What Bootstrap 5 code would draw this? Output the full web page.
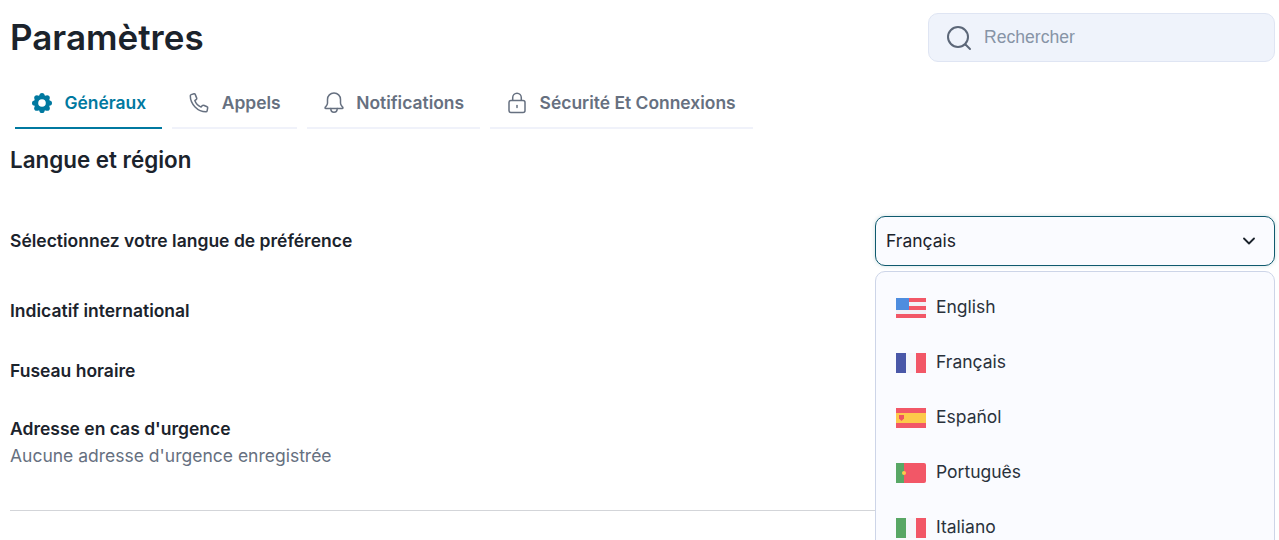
<!DOCTYPE html>
<html lang="fr">

<head>
  <meta charset="UTF-8">
  <meta name="viewport" content="width=device-width, initial-scale=1.0">
  <title>Paramètres</title>
  <link href="https://cdn.jsdelivr.net/npm/bootstrap@5.3.6/dist/css/bootstrap.min.css" rel="stylesheet">
  <style>
    html,
    body {
      height: 100%;
      overflow: hidden;
    }

    body {
      font-family: Inter, "Noto Sans", sans-serif;
      color: #1b232c;
      background: #fff;
    }

    .settings-page {
      padding: 13px 4px 0 10px;
    }

    .page-title {
      font-size: 35px;
      font-weight: 600;
      line-height: 48px;
      margin: -2px 0 0;
    }

    .search-box {
      width: 347px;
      height: 49px;
      background: #eff3fb;
      border: 1px solid #dfe5f3;
      border-radius: 10px;
      padding: 0 17px;
      gap: 12px;
      color: #8794a6;
      font-family: "Liberation Sans", Arial, sans-serif;
      font-size: 17.6px;
    }

    .settings-tabs {
      margin: 17px 0 0 5px;
      gap: 10px;
    }

    .settings-tabs .nav-link {
      height: 50px;
      padding: 0 16px;
      gap: 11.5px;
      font-size: 17.45px;
      font-weight: 600;
      color: #667080;
      border-bottom: 2px solid #f0f2fa;
    }

    .settings-tabs .nav-link.active {
      color: #0079a0;
      border-bottom-color: #0079a0;
    }

    .settings-tabs .nav-item:last-child .nav-link {
      padding-right: 17px;
    }

    .section-title {
      font-size: 22.4px;
      font-weight: 600;
      line-height: 30px;
      margin: 16px 0 0;
    }

    .setting-label {
      font-size: 17.5px;
      font-weight: 600;
      line-height: 24px;
    }

    .setting-hint {
      font-size: 17.5px;
      line-height: 24px;
      margin-top: 3px;
      color: #667080;
    }

    .lang-row {
      height: 50px;
      margin-top: 41px;
    }

    .phone-row {
      margin-top: 33px;
    }

    .zone-row {
      margin-top: 36px;
    }

    .address-row {
      margin-top: 34px;
    }

    .lang-picker {
      width: 400px;
    }

    .lang-select {
      height: 50px;
      padding: 0 19px 0 10px;
      background: #fafbff;
      border: 1px solid #0f5a6e;
      border-radius: 10px;
      box-shadow: 0 0 4px rgba(15, 90, 110, .2);
      font-size: 17.5px;
      color: #1b232c;
    }

    .lang-menu {
      top: 55px;
      left: 0;
      width: 100%;
      padding: 8px 0;
      background: #fafbff;
      border: 1px solid #cdd5e8;
      border-radius: 10px;
    }

    .lang-menu .dropdown-item {
      height: 55px;
      padding: 0 20px;
      gap: 10px;
      font-size: 17.5px;
      color: #2a323c;
    }

    .section-rule {
      margin: 42px 0 0;
      border-color: #d3d5d9;
      opacity: 1;
    }
  </style>
</head>

<body>

  <div class="settings-page">
    <div class="d-flex justify-content-between align-items-center">
      <h1 class="page-title">Paramètres</h1>
      <div class="search-box d-flex align-items-center">
        <svg width="26" height="26" viewBox="0 0 26 26" fill="none" stroke="#5c6778" stroke-width="2" stroke-linecap="round">
          <circle cx="12" cy="12" r="10" />
          <path d="M19.5 19.5 24 24" />
        </svg>
        <span>Rechercher</span>
      </div>
    </div>

    <ul class="nav settings-tabs">
      <li class="nav-item">
        <a class="nav-link active d-flex align-items-center" href="#">
          <svg width="22" height="22" viewBox="0 0 22 22" fill="#0079a0">
            <circle cx="11" cy="11" r="8" />
            <circle cx="11" cy="3.600" r="2.600" />
            <circle cx="11" cy="18.400" r="2.600" />
            <circle cx="3.600" cy="11" r="2.600" />
            <circle cx="18.400" cy="11" r="2.600" />
            <circle cx="5.800" cy="5.800" r="2.600" />
            <circle cx="16.200" cy="5.800" r="2.600" />
            <circle cx="5.800" cy="16.200" r="2.600" />
            <circle cx="16.200" cy="16.200" r="2.600" />
            <circle cx="11" cy="11" r="3.800" fill="#fff" />
          </svg>
          Généraux
        </a>
      </li>
      <li class="nav-item">
        <a class="nav-link d-flex align-items-center" href="#">
          <svg width="22" height="22" viewBox="0 0 22 22" fill="none" stroke="#667080" stroke-width="1.500" stroke-linejoin="round">
            <path d="M3.200 2.600 6 1.800c.6-.1 1 .1 1.200.6l1.500 3.700c.2.500.1.900-.3 1.200L6.800 8.600c1 2.800 3.400 5.300 6.300 6.500l1.300-1.500c.3-.4.800-.5 1.200-.3l3.500 1.500c.5.2.7.600.6 1.100l-.6 2.900c-.1.600-.6 1-1.200 1C9.800 19.800 2.300 12.200 2.300 3.800c0-.6.300-1 .9-1.200Z" />
          </svg>
          Appels
        </a>
      </li>
      <li class="nav-item">
        <a class="nav-link d-flex align-items-center" href="#">
          <svg width="22" height="22" viewBox="0 0 22 22" fill="none" stroke="#667080" stroke-width="1.500" stroke-linejoin="round" stroke-linecap="round">
            <path d="M11 1c-3.700 0-6.500 2.800-6.500 6.500v3.800c0 1.700-1.300 2.800-2.300 4-.4.600-.1 1.200.6 1.200h16.400c.7 0 1-.6.600-1.200-1-1.200-2.300-2.300-2.300-4V7.500C17.500 3.800 14.700 1 11 1Z" />
            <path d="M7.800 16.500c0 2.200 1.400 3.800 3.200 3.800s3.200-1.600 3.200-3.800" />
          </svg>
          Notifications
        </a>
      </li>
      <li class="nav-item">
        <a class="nav-link d-flex align-items-center" href="#">
          <svg width="22" height="22" viewBox="0 0 22 22" fill="none" stroke="#667080" stroke-width="1.500" stroke-linejoin="round">
            <rect x="3" y="8.500" width="16" height="12" rx="2" />
            <path d="M6.700 8.500V5.700c0-2.500 1.900-4.500 4.300-4.500s4.300 2 4.300 4.500v2.800" />
            <path d="M11 13.500v2" stroke-linecap="round" />
          </svg>
          Sécurité Et Connexions
        </a>
      </li>
    </ul>

    <h2 class="section-title">Langue et région</h2>

    <div class="lang-row d-flex justify-content-between align-items-center">
      <div class="setting-label">Sélectionnez votre langue de préférence</div>
      <div class="lang-picker position-relative">
        <div class="lang-select d-flex justify-content-between align-items-center">
          Français
          <svg width="12" height="8" viewBox="0 0 12 8" fill="none" stroke="#1b232c" stroke-width="1.800" stroke-linecap="round" stroke-linejoin="round">
            <path d="M1 1.500 6 6.500l5-5" />
          </svg>
        </div>
        <div class="lang-menu dropdown-menu show">
          <a class="dropdown-item d-flex align-items-center" href="#">
            <svg width="30" height="20" viewBox="0 0 30 20">
              <rect width="30" height="20" fill="#f1f1f6" />
              <path d="M0 0h30v4H0zM0 8h30v4H0zM0 16h30v4H0z" fill="#f25767" />
              <rect width="13" height="12" fill="#4e8ddf" />
            </svg>
            English
          </a>
          <a class="dropdown-item d-flex align-items-center" href="#">
            <svg width="30" height="20" viewBox="0 0 30 20">
              <rect width="10" height="20" fill="#4a58a8" />
              <rect x="10" width="10" height="20" fill="#f6f7fb" />
              <rect x="20" width="10" height="20" fill="#f25767" />
            </svg>
            Français
          </a>
          <a class="dropdown-item d-flex align-items-center" href="#">
            <svg width="30" height="20" viewBox="0 0 30 20">
              <rect width="30" height="20" fill="#f25767" />
              <rect y="5" width="30" height="10" fill="#fdc94a" />
              <path d="M3 7h5v3.500L5.500 13 3 10.500Z" fill="#ef5360" />
            </svg>
            Español
          </a>
          <a class="dropdown-item d-flex align-items-center" href="#">
            <svg width="30" height="20" viewBox="0 0 30 20">
              <path d="M0 0h28a2 2 0 0 1 2 2v16a2 2 0 0 1-2 2H0Z" fill="#f25767" />
              <rect width="8" height="20" fill="#58a765" />
              <circle cx="8" cy="10" r="2" fill="#fdc94a" />
            </svg>
            Português
          </a>
          <a class="dropdown-item d-flex align-items-center" href="#">
            <svg width="30" height="20" viewBox="0 0 30 20">
              <rect width="10" height="20" fill="#58a765" />
              <rect x="10" width="10" height="20" fill="#f6f7fb" />
              <rect x="20" width="10" height="20" fill="#f25767" />
            </svg>
            Italiano
          </a>
        </div>
      </div>
    </div>

    <div class="setting-label phone-row">Indicatif international</div>
    <div class="setting-label zone-row">Fuseau horaire</div>
    <div class="address-row">
      <div class="setting-label">Adresse en cas d'urgence</div>
      <div class="setting-hint">Aucune adresse d'urgence enregistrée</div>
    </div>

    <hr class="section-rule">
  </div>

  <script src="https://cdn.jsdelivr.net/npm/bootstrap@5.3.6/dist/js/bootstrap.bundle.min.js"></script>
</body>

</html>
